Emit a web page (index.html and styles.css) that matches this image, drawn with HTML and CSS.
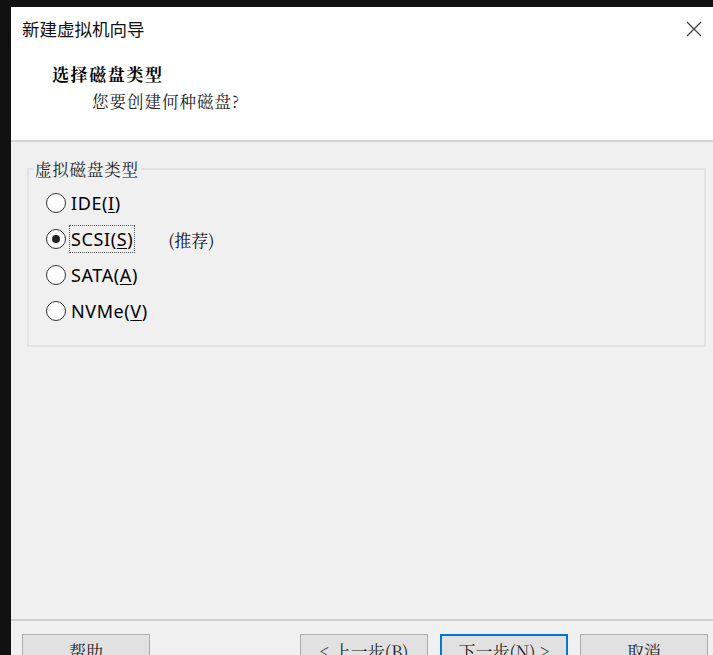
FILE: index.html
```html
<!DOCTYPE html>
<html lang="zh-CN">
<head>
<meta charset="utf-8">
<title>新建虚拟机向导</title>
<link rel="stylesheet" href="styles.css">
</head>
<body>
<div class="window">
  <div class="header">
    <div class="titlebar">
      <span class="title">新建虚拟机向导</span>
      <svg class="close" width="16" height="16" viewBox="0 0 16 16"><path d="M1 1L15 15M15 1L1 15" stroke="#444" stroke-width="1.3" fill="none"/></svg>
    </div>
    <div class="heading">选择磁盘类型</div>
    <div class="subheading">您要创建何种磁盘?</div>
  </div>
  <div class="content">
    <fieldset class="group">
      <legend>虚拟磁盘类型</legend>
      <div class="option"><span class="radio"></span><span class="label">IDE(<u>I</u>)</span></div>
      <div class="option"><span class="radio checked"></span><span class="label focus">SCSI(<u>S</u>)</span><span class="note">(推荐)</span></div>
      <div class="option"><span class="radio"></span><span class="label">SATA(<u>A</u>)</span></div>
      <div class="option"><span class="radio"></span><span class="label">NVMe(<u>V</u>)</span></div>
    </fieldset>
  </div>
  <div class="footer">
    <div class="btn">帮助</div>
    <div class="spacer"></div>
    <div class="btn">&lt; 上一步(B)</div>
    <div class="btn primary">下一步(N) &gt;</div>
    <div class="btn">取消</div>
  </div>
</div>
</body>
</html>
```
FILE: styles.css
```css
html, body {
  margin: 0;
  padding: 0;
  background: #111111;
  height: 655px;
  overflow: hidden;
}
body {
  padding: 7px 0 0 11px;
  font-family: "Noto Sans CJK SC", "Noto Sans", sans-serif;
  color: #000;
}
.window {
  background: #f0f0f0;
  height: 700px;
  display: flex;
  flex-direction: column;
}
.header {
  background: #ffffff;
  border-bottom: 2px solid #d4d4d4;
  box-sizing: border-box;
  height: 135px;
}
.titlebar {
  display: flex;
  align-items: center;
  justify-content: space-between;
  height: 44px;
  padding: 0 10px 0 11px;
}
.title {
  font-size: 17.5px;
  color: #111;
  margin-top: -1px;
}
.close {
  margin-right: 1px;
}
.heading {
  font-family: "Noto Serif CJK SC", "Noto Sans CJK SC", serif;
  font-weight: bold;
  font-size: 17px;
  letter-spacing: 1.6px;
  margin: 11px 0 0 41px;
  line-height: 24px;
}
.subheading {
  font-family: "Noto Serif CJK SC", "Noto Sans CJK SC", serif;
  font-size: 16.5px;
  letter-spacing: 1px;
  margin: 3px 0 0 81px;
  line-height: 24px;
  color: #222;
}
.content {
  padding: 25px 7px 0 16px;
  height: 477px;
  box-sizing: border-box;
}
.group {
  margin: 0;
  border: 2px solid #e2e2e2;
  padding: 6px 0 14px 17px;
  height: 188px;
  box-sizing: border-box;
  position: relative;
  top: -8px;
}
.group legend {
  font-family: "Noto Serif CJK SC", "Noto Sans CJK SC", serif;
  font-size: 16.5px;
  padding: 0 2px;
  margin-left: -13px;
  letter-spacing: 0.8px;
  color: #222;
  line-height: 20px;
}
.option {
  display: flex;
  align-items: center;
  height: 36px;
}
.radio {
  width: 20px;
  height: 20px;
  border: 1.5px solid #333;
  border-radius: 50%;
  background: #fff;
  box-sizing: border-box;
  position: relative;
  flex: none;
}
.radio.checked::after {
  content: "";
  position: absolute;
  left: 4.5px;
  top: 4.5px;
  width: 8px;
  height: 8px;
  border-radius: 50%;
  background: #222;
}
.label {
  font-family: "Noto Sans", "Open Sans", sans-serif;
  font-size: 18px;
  letter-spacing: 0.6px;
  margin-left: 3px;
  padding: 0 1px;
  line-height: 26px;
  border: 1px dotted transparent;
}
.label.focus {
  border-color: #555;
}
.label u {
  text-decoration-thickness: 1px;
  text-underline-offset: 2px;
}
.note {
  font-family: "Noto Serif CJK SC", "Noto Sans CJK SC", serif;
  font-size: 17px;
  margin-left: 33px;
  color: #111;
}
.footer {
  border-top: 2px solid #d0d0d0;
  display: flex;
  padding: 13px 5px 0 11px;
  gap: 12px;
}
.spacer {
  flex: 1;
}
.btn {
  width: 128px;
  height: 34px;
  box-sizing: border-box;
  background: #e1e1e1;
  border: 1px solid #adadad;
  text-align: center;
  font-family: "Noto Serif CJK SC", "Noto Sans CJK SC", serif;
  font-size: 17px;
  line-height: 32px;
  color: #222;
  flex: none;
}
.btn.primary {
  border: 2px solid #0078d7;
  line-height: 30px;
}
```
